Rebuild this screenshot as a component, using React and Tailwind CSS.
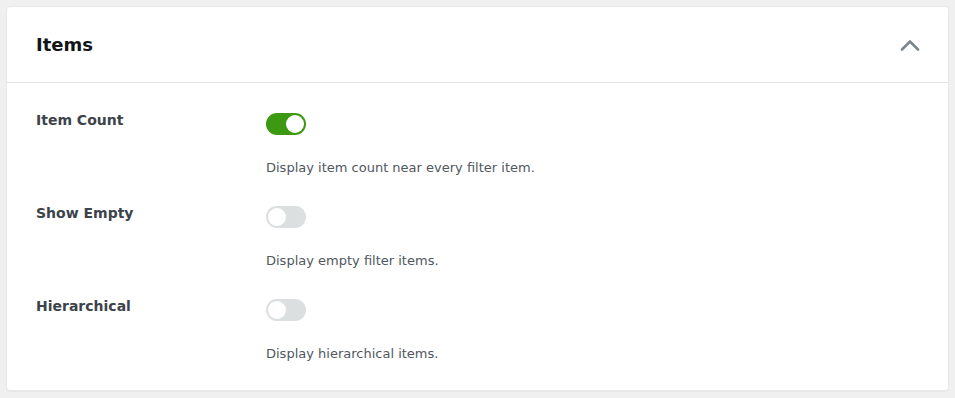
import { useState } from "react";

const font = { fontFamily: '"DejaVu Sans", sans-serif' };

function Toggle({ on, onChange }) {
  return (
    <button
      type="button"
      role="switch"
      aria-checked={on}
      onClick={() => onChange(!on)}
      className={`relative h-[22px] w-[40px] rounded-full transition-colors ${
        on ? "bg-[#3d9812]" : "bg-[#dcdfe0]"
      }`}
    >
      <span
        className={`absolute top-[2px] h-[18px] w-[18px] rounded-full bg-white transition-all ${
          on ? "left-[20px]" : "left-[2px]"
        }`}
      />
    </button>
  );
}

function SettingRow({ label, description, on, onChange }) {
  return (
    <div className="flex">
      <div className="w-[230px] text-[14px] font-bold leading-5 text-[#3c434a]">{label}</div>
      <div className="flex flex-col items-start">
        <div className="mt-[3px] flex">
          <Toggle on={on} onChange={onChange} />
        </div>
        <p className="mt-[23px] text-[13px] leading-5 text-[#50575e]">{description}</p>
      </div>
    </div>
  );
}

export default function App() {
  const [settings, setSettings] = useState({ count: true, empty: false, hier: false });
  const set = (k) => (v) => setSettings((s) => ({ ...s, [k]: v }));

  return (
    <div className="min-h-[398px] bg-[#f0f0f1] p-[6px]" style={font}>
      <section className="rounded-[4px] border border-[#e8e8ea] bg-white shadow-[0_1px_1px_rgba(0,0,0,0.04)]">
        <header className="flex h-[76px] items-center justify-between border-b border-[#e2e4e7] pl-[29px] pr-[28px]">
          <h2 className="text-[18px] font-bold text-[#101517]">Items</h2>
          <svg width="20" height="12" viewBox="0 0 20 12" fill="none" className="text-[#7a848c]">
            <path d="M2 10.5 L10 2.5 L18 10.5" stroke="currentColor" strokeWidth="2.6" strokeLinecap="round" />
          </svg>
        </header>
        <div className="flex flex-col gap-[25px] px-[29px] pb-[26px] pt-[27px]">
          <SettingRow
            label="Item Count"
            description="Display item count near every filter item."
            on={settings.count}
            onChange={set("count")}
          />
          <SettingRow
            label="Show Empty"
            description="Display empty filter items."
            on={settings.empty}
            onChange={set("empty")}
          />
          <SettingRow
            label="Hierarchical"
            description="Display hierarchical items."
            on={settings.hier}
            onChange={set("hier")}
          />
        </div>
      </section>
    </div>
  );
}
